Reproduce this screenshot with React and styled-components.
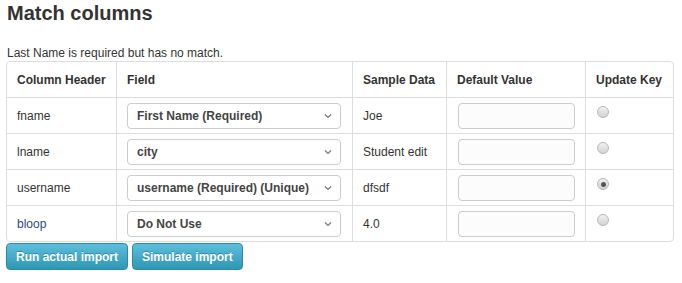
import React from "react";
import styled, { createGlobalStyle } from "styled-components";

const Global = createGlobalStyle`
  html, body { margin: 0; padding: 0; background: #fff; }
  body { font-family: "Liberation Sans", Arial, sans-serif; color: #333; }
  * { box-sizing: border-box; }
`;

const Page = styled.div`
  padding: 0 9px 0 6px;
  width: 682px;
`;

const Title = styled.h2`
  margin: 0;
  padding: 1px 0 0 1px;
  font-size: 20px;
  line-height: 24px;
  font-weight: bold;
  color: #333;
`;

const Message = styled.div`
  margin-top: 20px;
  padding-left: 1px;
  font-size: 12px;
  line-height: 16px;
  color: #333;
`;

const Table = styled.table`
  width: 668px;
  border-collapse: separate;
  border-spacing: 0;
  table-layout: fixed;
  border: 1px solid #ddd;
  border-radius: 4px;
  font-size: 12px;
`;

const Row = styled.tr`
  height: ${(p) => p.$h}px;
`;

const Th = styled.th`
  width: ${(p) => p.$w}px;
  padding: 0 10px;
  text-align: left;
  font-weight: bold;
  color: #333;
  border-left: ${(p) => (p.$first ? "none" : "1px solid #ddd")};
  vertical-align: middle;
`;

const Td = styled.td`
  padding: ${(p) => (p.$top ? "8px 10px 0 11px" : "4px 10px")};
  border-top: 1px solid #ddd;
  border-left: ${(p) => (p.$first ? "none" : "1px solid #ddd")};
  vertical-align: ${(p) => (p.$top ? "top" : "middle")};
  color: ${(p) => p.$color || "#333"};
`;

const SelectWrap = styled.div`
  position: relative;
  width: 214px;
  height: 26px;
`;

const Select = styled.select`
  appearance: none;
  -webkit-appearance: none;
  width: 100%;
  height: 100%;
  border: 1px solid #ccc;
  border-radius: 4px;
  background: #fff;
  padding: 0 24px 0 9px;
  font-family: "Liberation Sans", Arial, sans-serif;
  font-size: 12px;
  font-weight: bold;
  color: #444;
  outline: none;
`;

const Chevron = styled.svg`
  position: absolute;
  right: 9px;
  top: 10px;
  pointer-events: none;
`;

const Input = styled.input`
  width: 117px;
  height: 26px;
  border: 1px solid #ccc;
  border-radius: 4px;
  background: #fcfcfc;
  padding: 0 6px;
  font-size: 12px;
  margin-left: 1px;
  display: block;
`;

const Radio = styled.span`
  display: block;
  width: 12px;
  height: 12px;
  border-radius: 50%;
  border: 1px solid #b5b5b5;
  background: linear-gradient(#f2f2f2, #d2d2d2);
  position: relative;
  &::after {
    content: "";
    display: ${(p) => (p.$checked ? "block" : "none")};
    position: absolute;
    left: 2.5px;
    top: 2.5px;
    width: 5px;
    height: 5px;
    border-radius: 50%;
    background: #555;
  }
`;

const Buttons = styled.div`
  display: flex;
  gap: 4px;
  margin-top: 1px;
`;

const Button = styled.button`
  height: 27px;
  padding: 0 9px;
  border: 1px solid #2a8aa8;
  border-radius: 4px;
  background: linear-gradient(#5bc0de, #2f96b4);
  color: #fff;
  font-family: "Liberation Sans", Arial, sans-serif;
  font-size: 12px;
  font-weight: bold;
  text-shadow: 0 -1px 0 rgba(0, 0, 0, 0.25);
  cursor: pointer;
`;

const rows = [
  { col: "fname", field: "First Name (Required)", sample: "Joe", key: false },
  { col: "lname", field: "city", sample: "Student edit", key: false },
  { col: "username", field: "username (Required) (Unique)", sample: "dfsdf", key: true },
  { col: "bloop", field: "Do Not Use", sample: "4.0", key: false, color: "#2a4a80" },
];

const cols = [
  ["Column Header", 109],
  ["Field", 236],
  ["Sample Data", 94],
  ["Default Value", 139],
  ["Update Key", 88],
];

export default function App() {
  return (
    <>
      <Global />
      <Page>
        <Title>Match columns</Title>
        <Message>Last Name is required but has no match.</Message>
        <Table>
          <thead>
            <Row $h={35}>
              {cols.map(([label, w], i) => (
                <Th key={label} $w={w} $first={i === 0}>
                  {label}
                </Th>
              ))}
            </Row>
          </thead>
          <tbody>
            {rows.map((r) => (
              <Row key={r.col} $h={36}>
                <Td $first $color={r.color}>{r.col}</Td>
                <Td>
                  <SelectWrap>
                    <Select defaultValue={r.field}>
                      <option>{r.field}</option>
                    </Select>
                    <Chevron width="8" height="6" viewBox="0 0 8 6">
                      <path d="M1 1.5 L4 4.5 L7 1.5" fill="none" stroke="#777" strokeWidth="1.2" />
                    </Chevron>
                  </SelectWrap>
                </Td>
                <Td>{r.sample}</Td>
                <Td>
                  <Input type="text" />
                </Td>
                <Td $top>
                  <Radio $checked={r.key} />
                </Td>
              </Row>
            ))}
          </tbody>
        </Table>
        <Buttons>
          <Button>Run actual import</Button>
          <Button>Simulate import</Button>
        </Buttons>
      </Page>
    </>
  );
}
